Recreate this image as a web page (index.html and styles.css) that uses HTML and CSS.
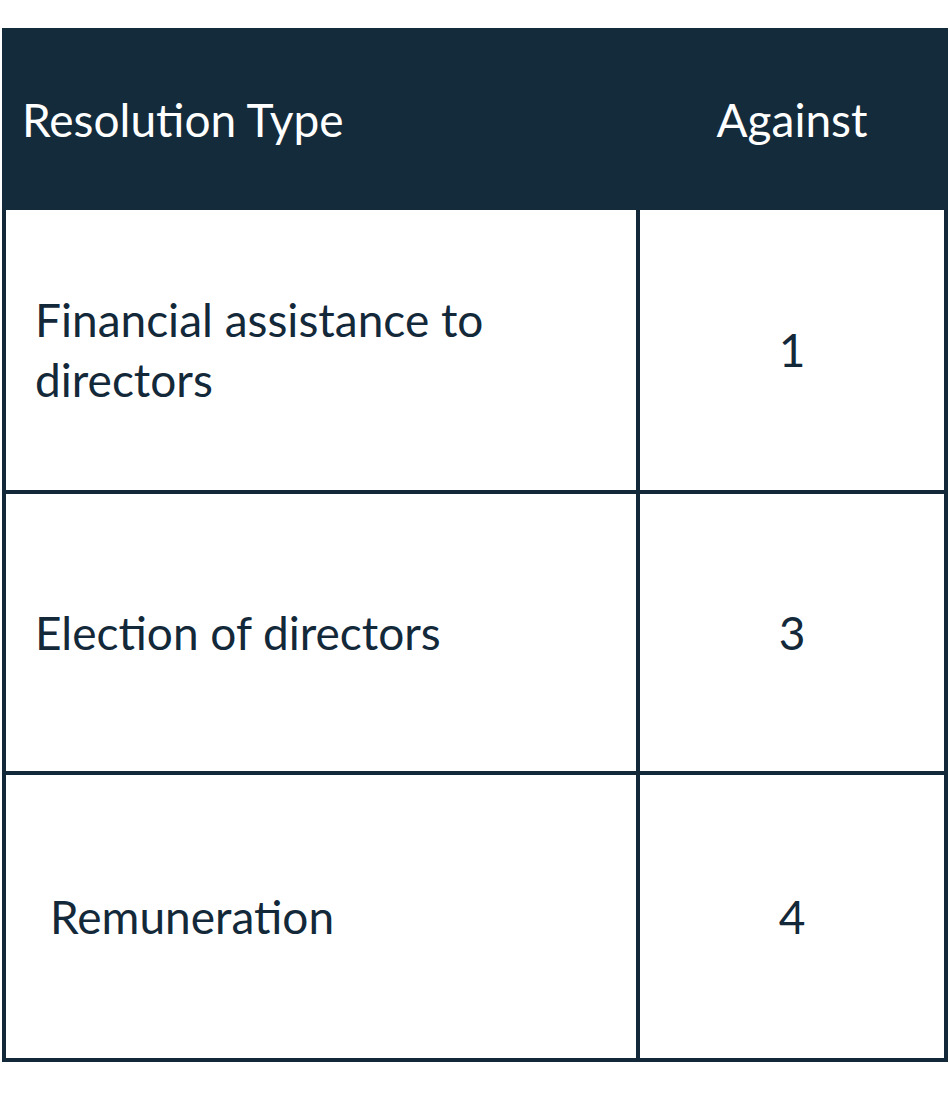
FILE: index.html
```html
<!DOCTYPE html>
<html>
<head>
<meta charset="utf-8">
<link rel="stylesheet" href="styles.css">
</head>
<body>
<table class="res-table">
  <colgroup>
    <col class="c-type">
    <col class="c-num">
  </colgroup>
  <thead>
    <tr class="head-row">
      <th class="col-type">Resolution Type</th>
      <th class="col-against">Against</th>
    </tr>
  </thead>
  <tbody>
    <tr class="row row-1">
      <td class="cell-type">Financial assistance to<br>directors</td>
      <td class="cell-num">1</td>
    </tr>
    <tr class="row row-2">
      <td class="cell-type">Election of directors</td>
      <td class="cell-num">3</td>
    </tr>
    <tr class="row row-3">
      <td class="cell-type cell-indent">Remuneration</td>
      <td class="cell-num">4</td>
    </tr>
  </tbody>
</table>
</body>
</html>
```
FILE: styles.css
```css
html, body {
  margin: 0;
  padding: 0;
  background: #ffffff;
}
body {
  padding: 28px 0 0 2px;
  font-family: "Lato", "Noto Sans", sans-serif;
  color: #13293a;
}
.res-table {
  border-collapse: collapse;
  width: 942px;
  table-layout: fixed;
  border: 4px solid #13293a;
}
.c-type { width: 634px; }
.c-num { width: 308px; }
.head-row {
  background: #142b3b;
  height: 178px;
}
.head-row th {
  color: #ffffff;
  font-weight: 400;
  font-size: 46px;
  border: 4px solid #142b3b;
  padding: 0;
}
.col-type {
  text-align: left;
  padding-left: 16px !important;
}
.col-against {
  text-align: center;
}
.row td {
  border: 4px solid #13293a;
  font-size: 46px;
  line-height: 60px;
  padding: 0;
}
.row-1 { height: 284px; }
.row-2 { height: 281px; }
.row-3 { height: 287px; }
.cell-type {
  padding-left: 29px !important;
  text-align: left;
}
.cell-indent {
  padding-left: 44px !important;
}
.cell-num {
  text-align: center;
}
```
